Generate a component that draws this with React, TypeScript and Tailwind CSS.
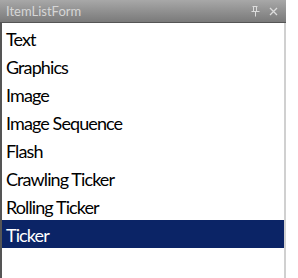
const ITEMS = [
    "Text",
    "Graphics",
    "Image",
    "Image Sequence",
    "Flash",
    "Crawling Ticker",
    "Rolling Ticker",
    "Ticker",
]

export default function App() {
    const selected = 7

    return (
        <div className="w-[298px] h-[278px] bg-white flex flex-col overflow-hidden" style={{ fontFamily: 'Lato, "Noto Sans", sans-serif' }}>
            {/* Title bar */}
            <div className="w-[286px] h-[23px] shrink-0 flex items-center justify-between pl-[6px] pr-[8px] bg-gradient-to-b from-[#a8a8a8] to-[#7a7a7a] border-b border-[#555]">
                <span className="text-[13px] text-[#d6d6d6] leading-none">ItemListForm</span>
                <div className="flex items-center gap-[9px] text-[#d8d8d8] text-[12px] leading-none">
                    <svg width="9" height="11" viewBox="0 0 9 11" fill="none" stroke="#dcdcdc" strokeWidth="1">
                        <path d="M2.5 0.5v5M5.5 0.5v5M1.5 0.5h5M0.5 5.5h8M4.5 5.5v5" />
                    </svg>
                    <svg width="9" height="9" viewBox="0 0 9 9" fill="none" stroke="#dcdcdc" strokeWidth="1.3">
                        <path d="M1 1l7 7M8 1l-7 7" />
                    </svg>
                </div>
            </div>

            {/* List */}
            <div className="flex-1 flex">
                <div className="w-[286px] flex flex-col border-l-2 border-[#555] border-r-2 border-r-[#d0d0d0] pt-[1px]">
                    {ITEMS.map((item, i) => (
                        <div
                            key={item}
                            className={`h-[28px] flex items-center pl-[4px] pt-[2px] text-[18px] tracking-[-0.9px] leading-none ${i === selected ? "bg-[#0b2466] text-white" : "text-black"}`}
                        >
                            {item}
                        </div>
                    ))}
                </div>
            </div>
        </div>
    )
}
